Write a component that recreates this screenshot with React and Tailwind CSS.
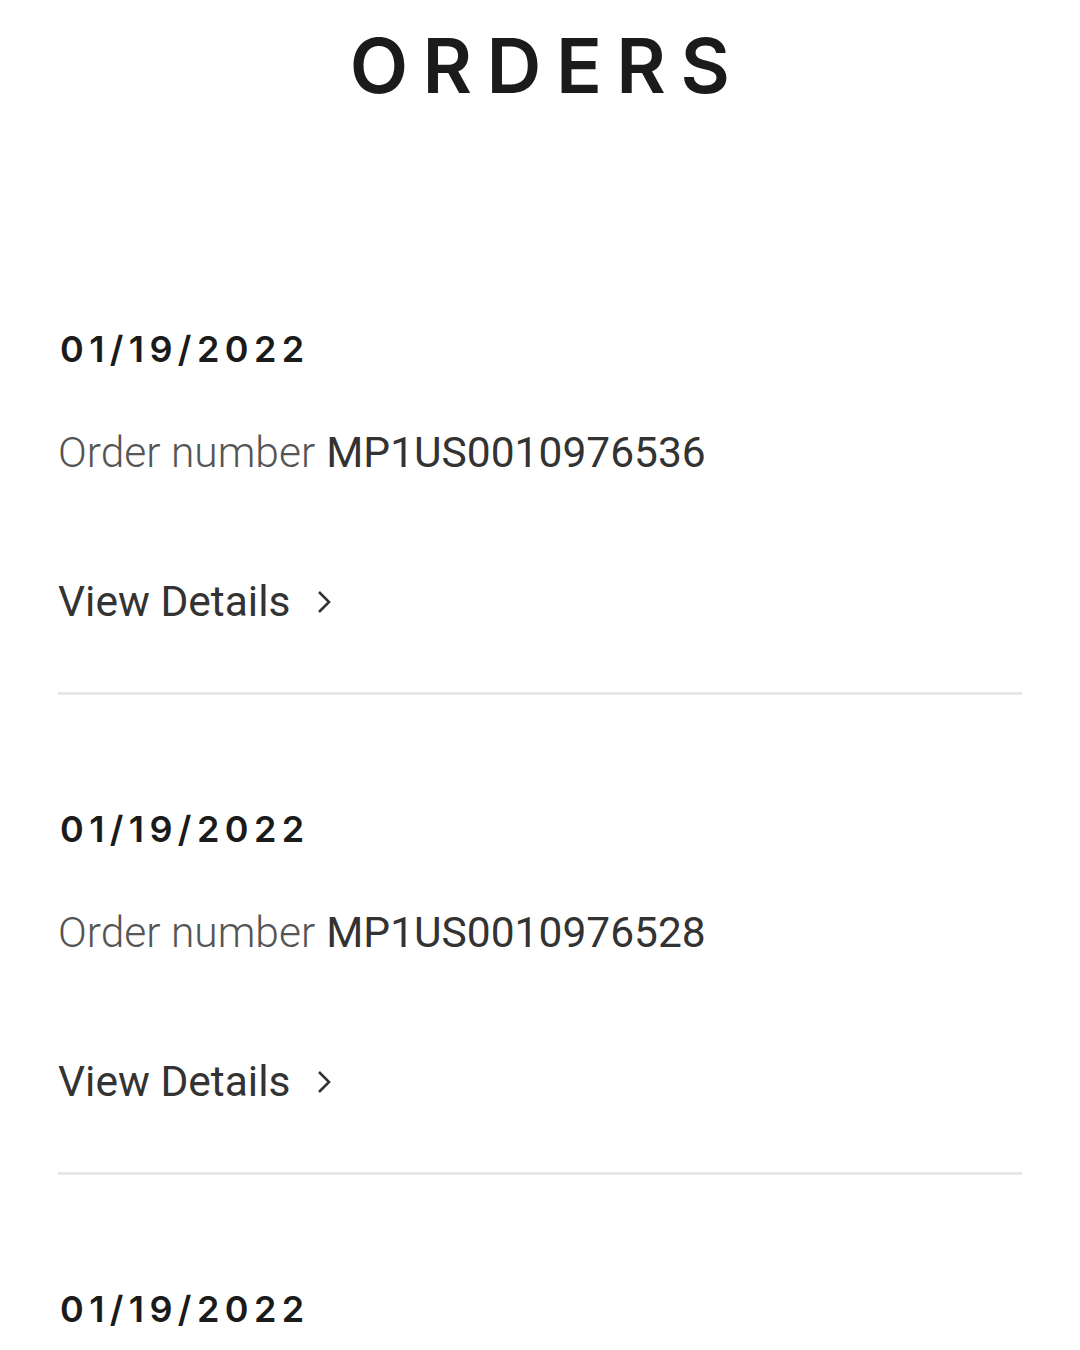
const orders = [
  { date: "01/19/2022", number: "MP1US0010976536" },
  { date: "01/19/2022", number: "MP1US0010976528" },
];

function Chevron() {
  return (
    <svg width="16" height="26" viewBox="0 0 16 26" fill="none" className="text-[#333]">
      <path d="M3 3l10 10-10 10" stroke="currentColor" strokeWidth="2.6" />
    </svg>
  );
}

function DateRow({ date }) {
  return (
    <div className="mt-[104px] flex h-[60px] items-center pl-[2px] font-['Inter',sans-serif] text-[36px] font-semibold tracking-[0.15em] text-[#1b1b1b]">
      {date}
    </div>
  );
}

export default function App() {
  return (
    <div className="h-[1350px] w-[1080px] overflow-hidden bg-white font-['Roboto',sans-serif]">
      <header className="flex h-[215px] justify-center pt-[22px]">
        <h1 className="h-[86px] pl-[14px] text-[76px] font-semibold leading-[86px] tracking-[0.19em] text-[#1b1b1b] font-['Inter',sans-serif]">
          ORDERS
        </h1>
      </header>

      <div className="px-[58px]">
        {orders.map((o, i) => (
          <div key={i}>
            <DateRow date={o.date} />
            <div className="mt-[44px] flex h-[60px] items-center text-[42.5px]">
              <span className="font-light text-[#555]">Order number</span>
              <span className="ml-[11px] text-[#333]">{o.number}</span>
            </div>
            <button className="mt-[89px] flex h-[60px] items-center gap-[26px] text-[42.5px] text-[#333]">
              <span>View Details</span>
              <Chevron />
            </button>
            <div className="mt-[60px] h-[3px] bg-[#e8e8e8]" />
          </div>
        ))}
        {/* next order, only its date is on screen */}
        <DateRow date="01/19/2022" />
      </div>
    </div>
  );
}
